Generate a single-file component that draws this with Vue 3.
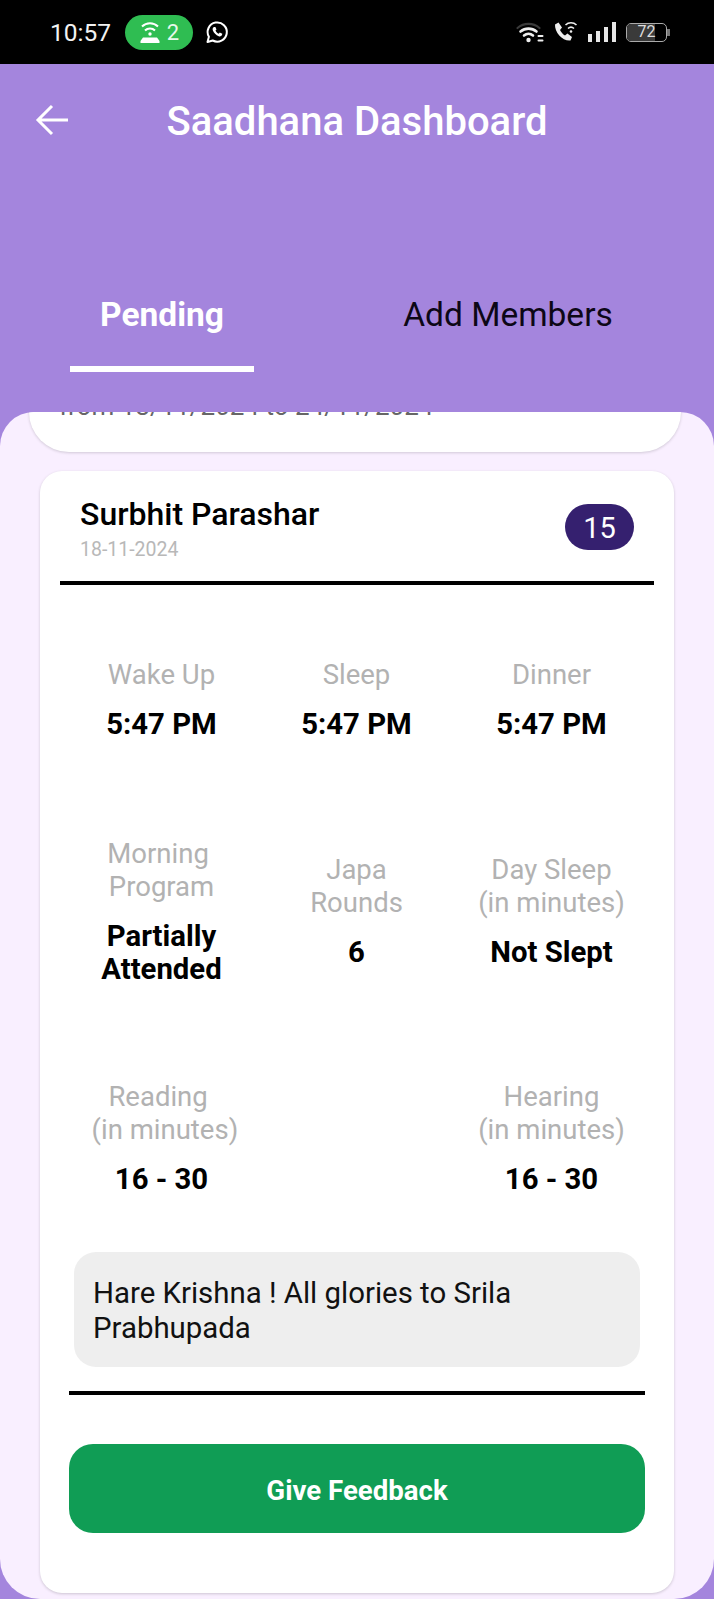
<template>
  <div class="phone">
    <div class="status">
      <span class="time">10:57</span>
      <span class="hotspot">
        <svg width="22" height="24" viewBox="0 0 22 24" fill="none" stroke="#fff" stroke-width="2">
          <path d="M3 6.500a11.500 11.500 0 0 1 16 0" />
          <path d="M6 10.500a7 7 0 0 1 10 0" />
          <circle cx="11" cy="14" r="1.700" fill="#fff" stroke="none" />
          <path d="M1.500 23v-2l2.500-3.500h14l2.500 3.500v2z" fill="#fff" stroke="none" />
        </svg>
        <span>2</span>
      </span>
      <svg class="wa" width="24" height="24" viewBox="0 0 24 24" fill="none">
        <path d="M2.500 22l1.400-5.200A9.600 9.600 0 1 1 7.700 20.500z" stroke="#fff" stroke-width="2" stroke-linejoin="round" />
        <path d="M9 7c-1.100.5-1.700 1.900-1.200 3.300 1 2.700 3.200 4.900 5.900 5.900 1.400.5 2.700 0 3.300-1.100l.3-1.400-2.500-1.200-1.100 1.200c-1.300-.5-2.700-1.900-3.200-3.200l1-1.100L10.400 7z" fill="#fff" />
      </svg>
      <span class="status-right">
        <svg width="28" height="22" viewBox="0 0 28 22" fill="none" stroke="#eee" stroke-linecap="round">
          <path d="M1.500 7a17 17 0 0 1 22 0" stroke="#3a3a3a" stroke-width="2.200" />
          <path d="M4.500 10.500a12.500 12.500 0 0 1 16 0" stroke-width="2.600" />
          <path d="M8 14.500a7 7 0 0 1 9 0" stroke-width="2.600" />
          <circle cx="12.500" cy="19" r="2.200" fill="#eee" stroke="none" />
          <path d="M22.500 15h4M22.500 19.500h4" stroke-width="2" />
        </svg>
        <svg width="24" height="22" viewBox="0 0 24 22" fill="none" stroke="#eee">
          <path d="M1 3.500l3.500-2L8 6.500 6 9c1 2.200 2.800 4.200 5 5.500l2.400-2 4.600 3.500-1.500 3.500C9 20.500.5 11.500 1 3.500z" fill="#eee" stroke="none" />
          <path d="M11.500 4a8 8 0 0 1 11 0M14 7.500a4.500 4.500 0 0 1 6 0" stroke-width="1.600" />
          <circle cx="17" cy="10.500" r="1.300" fill="#eee" stroke="none" />
        </svg>
        <span class="bars">
          <i class="b1"></i><i class="b2"></i><i class="b3"></i><i class="b4"></i>
        </span>
        <span class="battery-wrap">
          <span class="battery"><span class="level"></span><span class="pct">72</span></span>
          <span class="cap"></span>
        </span>
      </span>
    </div>

    <div class="header">
      <div class="topbar">
        <svg class="back" width="36" height="32" viewBox="0 0 36 32" fill="none" stroke="#fff" stroke-width="3">
          <path d="M33 16H3M17 2L3 16l14 14" />
        </svg>
        <h1>Saadhana Dashboard</h1>
      </div>
      <div class="tabs">
        <div class="tab active">Pending</div>
        <div class="tab">Add Members</div>
      </div>
    </div>

    <div class="panel">
      <div class="range-card">
        <p>from 18/11/2024 to 24/11/2024</p>
      </div>

      <div class="card">
        <div class="card-head">
          <div>
            <div class="name">{{ entry.name }}</div>
            <div class="date">{{ entry.date }}</div>
          </div>
          <span class="badge">{{ entry.score }}</span>
        </div>

        <div class="grid">
          <div v-for="(item, i) in entry.fields" :key="i" class="cell">
            <div class="label" v-html="item.label"></div>
            <div class="value" v-html="item.value"></div>
          </div>
        </div>

        <div class="note">Hare Krishna ! All glories to Srila Prabhupada</div>
        <div class="rule"></div>
        <button class="feedback">Give Feedback</button>
      </div>
    </div>
  </div>
</template>

<script setup>
const entry = {
  name: "Surbhit Parashar",
  date: "18-11-2024",
  score: 15,
  fields: [
    { label: "Wake Up", value: "5:47 PM" },
    { label: "Sleep", value: "5:47 PM" },
    { label: "Dinner", value: "5:47 PM" },
    { label: "Morning&nbsp;<br>Program", value: "Partially<br>Attended" },
    { label: "Japa<br>Rounds", value: "6" },
    { label: "Day Sleep<br>(in minutes)", value: "Not Slept" },
    { label: "Reading&nbsp;<br>&nbsp;(in minutes)", value: "16 - 30" },
    { label: "", value: "" },
    { label: "Hearing<br>(in minutes)", value: "16 - 30" },
  ],
};
</script>

<style>
html, body {
  margin: 0;
  background: #a485dd;
}
</style>

<style scoped>
.phone {
  width: 714px;
  height: 1599px;
  overflow: hidden;
  background: #a485dd;
  font-family: Roboto, "Liberation Sans", sans-serif;
  display: flex;
  flex-direction: column;
}
.status {
  height: 64px;
  flex: none;
  background: #000;
  color: #fff;
  display: flex;
  align-items: center;
  padding: 0 44px 0 50px;
  box-sizing: border-box;
}
.time {
  font-size: 24.500px;
  color: #f2f2f2;
}
.hotspot {
  margin-left: 14px;
  width: 68px;
  height: 35px;
  border-radius: 18px;
  background: #2fbd52;
  display: flex;
  align-items: center;
  justify-content: center;
  gap: 6px;
  font-size: 22px;
  color: #e8f8ec;
}
.wa {
  margin-left: 12px;
}
.status-right {
  margin-left: auto;
  display: flex;
  align-items: center;
  gap: 10px;
}
.bars {
  display: flex;
  align-items: flex-end;
  gap: 3.500px;
  height: 20px;
}
.bars i {
  width: 4.500px;
  background: #e6e6e6;
}
.b1 { height: 8px; }
.b2 { height: 11px; }
.b3 { height: 15px; }
.b4 { height: 20px; }
.battery-wrap {
  display: flex;
  align-items: center;
}
.battery {
  position: relative;
  width: 41px;
  height: 19px;
  border: 1.500px solid #aaa;
  border-radius: 5px;
  box-sizing: border-box;
  overflow: hidden;
}
.level {
  display: block;
  width: 72%;
  height: 100%;
  background: #3a3a3a;
}
.pct {
  position: absolute;
  inset: 0;
  text-align: center;
  font-size: 16px;
  line-height: 16px;
  color: #ddd;
}
.cap {
  width: 3px;
  height: 7px;
  background: #777;
}
.header {
  flex: none;
  height: 348px;
}
.topbar {
  height: 112px;
  position: relative;
  display: flex;
  align-items: center;
  justify-content: center;
}
.back {
  position: absolute;
  left: 35px;
  top: 40px;
}
h1 {
  margin: 3px 0 0;
  font-size: 40px;
  font-weight: 500;
  color: #fff;
}
.tabs {
  margin-top: 119px;
  display: flex;
}
.tab {
  font-size: 33.500px;
  line-height: 40px;
  color: #0d0716;
  text-align: center;
}
.tab.active {
  width: 184px;
  margin-left: 70px;
  padding-bottom: 31px;
  color: #fff;
  font-weight: 700;
  border-bottom: 6px solid #fff;
}
.tab:last-child {
  width: 300px;
  margin-left: 104px;
}
.panel {
  flex: 1;
  min-height: 0;
  background: #f9efff;
  border-radius: 34px 34px 40px 40px;
  overflow: hidden;
}
.range-card {
  margin: -60px 33px 0 29px;
  height: 100px;
  background: #fff;
  border-radius: 0 0 40px 40px;
  box-shadow: 0 1px 3px rgba(0, 0, 0, 0.16);
  overflow: hidden;
}
.range-card p {
  margin: 0;
  padding: 39px 0 0 30px;
  font-size: 26px;
  line-height: 30px;
  color: #666;
}
.card {
  margin: 19px 40px 0;
  height: 1122px;
  box-sizing: border-box;
  background: #fff;
  border-radius: 22px;
  box-shadow: 0 1px 3px rgba(0, 0, 0, 0.18);
  padding: 0 29px;
}
.card-head {
  margin: 0 -9px;
  height: 110px;
  border-bottom: 4px solid #000;
  display: flex;
  justify-content: space-between;
  padding: 0 20px;
  align-items: flex-start;
}
.name {
  margin-top: 24px;
  font-size: 32px;
  font-weight: 500;
  color: #000;
  line-height: 38px;
}
.date {
  margin-top: 6px;
  font-size: 19.500px;
  color: #b8b8b8;
  line-height: 22px;
}
.badge {
  margin-top: 33px;
  width: 69px;
  height: 46px;
  border-radius: 23px;
  background: #35206f;
  color: #fff;
  font-size: 29px;
  line-height: 48px;
  text-align: center;
}
.grid {
  display: grid;
  grid-template-columns: repeat(3, 195px);
  grid-template-rows: 160px 264px 190px;
  margin: 0 -4px 0 -5px;
  padding-top: 34px;
}
.cell {
  display: flex;
  flex-direction: column;
  justify-content: center;
  align-items: center;
  text-align: center;
}
.label {
  font-size: 27.500px;
  line-height: 33px;
  color: #b2b2b2;
}
.value {
  margin-top: 17px;
  font-size: 29.300px;
  line-height: 33px;
  font-weight: 700;
  color: #000;
}
.note {
  margin: 19px 5px 0;
  padding: 24px 19px;
  height: 115px;
  box-sizing: border-box;
  background: #eee;
  border-radius: 22px;
  font-size: 29.400px;
  line-height: 35px;
  color: #111;
}
.rule {
  height: 4px;
  margin-top: 24px;
  background: #000;
}
.feedback {
  display: block;
  width: 100%;
  height: 89px;
  margin-top: 49px;
  padding-top: 4px;
  border: none;
  border-radius: 24px;
  background: #109d55;
  color: #fff;
  font-family: inherit;
  font-size: 27.600px;
  font-weight: 700;
}
</style>
